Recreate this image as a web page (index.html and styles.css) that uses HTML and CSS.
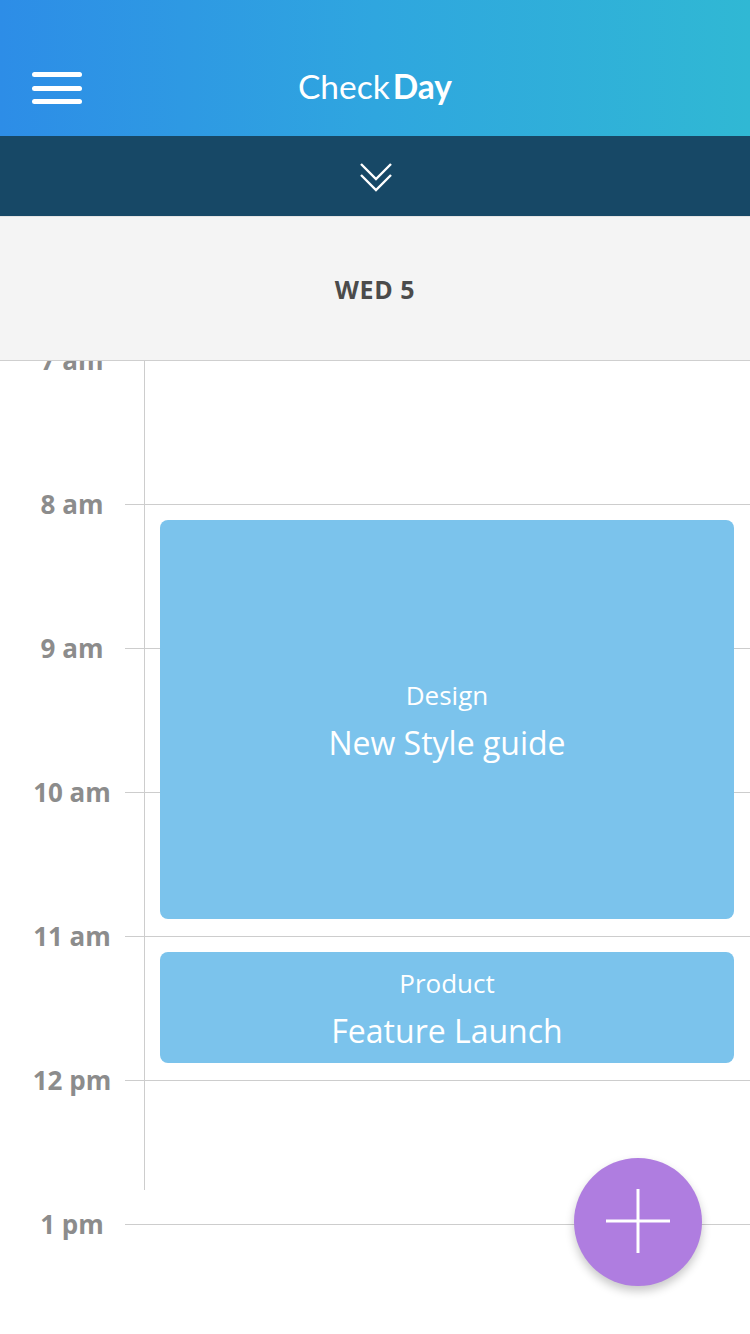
FILE: index.html
```html
<!DOCTYPE html>
<html>
<head>
<meta charset="utf-8">
<link rel="stylesheet" href="styles.css">
</head>
<body>
<div class="app">
  <header class="topbar">
    <div class="menu">
      <span class="bar"></span><span class="bar"></span><span class="bar"></span>
    </div>
    <div class="title"><span class="light">Check</span><span class="bold">Day</span></div>
    <div class="spacer"></div>
  </header>
  <div class="expander">
    <svg width="34" height="34" viewBox="0 0 34 34">
      <polyline points="2,5 17,20 32,5" fill="none" stroke="#fff" stroke-width="2.4"/>
      <polyline points="2,16 17,31 32,16" fill="none" stroke="#fff" stroke-width="2.4"/>
    </svg>
  </div>
  <div class="dayhead">WED 5</div>
  <main class="timeline">
    <div class="rows">
      <div class="row"><span class="time">7 am</span><span class="rule"></span></div>
      <div class="row"><span class="time">8 am</span><span class="rule"></span></div>
      <div class="row"><span class="time">9 am</span><span class="rule"></span></div>
      <div class="row"><span class="time">10 am</span><span class="rule"></span></div>
      <div class="row"><span class="time">11 am</span><span class="rule"></span></div>
      <div class="row"><span class="time">12 pm</span><span class="rule"></span></div>
      <div class="row"><span class="time">1 pm</span><span class="rule"></span></div>
    </div>
    <div class="vline"></div>
    <div class="event ev-design">
      <div class="cat">Design</div>
      <div class="name">New Style guide</div>
    </div>
    <div class="event ev-product">
      <div class="cat">Product</div>
      <div class="name">Feature Launch</div>
    </div>
    <button class="fab" aria-label="Add">
      <svg width="66" height="66" viewBox="0 0 66 66">
        <line x1="1" y1="32" x2="65" y2="32" stroke="#fff" stroke-width="3"/>
        <line x1="33" y1="0" x2="33" y2="64" stroke="#fff" stroke-width="3"/>
      </svg>
    </button>
  </main>
</div>
</body>
</html>
```
FILE: styles.css
```css
* { box-sizing: border-box; }
html, body {
  margin: 0;
  padding: 0;
  width: 750px;
  height: 1334px;
  overflow: hidden;
  background: #fff;
  font-family: "Open Sans", "Noto Sans", sans-serif;
}
.app {
  width: 750px;
  height: 1334px;
  display: flex;
  flex-direction: column;
}
.topbar {
  height: 136px;
  flex: none;
  padding-top: 40px;
  display: grid;
  grid-template-columns: 1fr auto 1fr;
  align-items: center;
  background: linear-gradient(90deg, #2d8de7 0%, #2fa6df 50%, #30b8d4 100%);
  color: #fff;
}
.menu {
  padding-left: 32px;
  display: flex;
  flex-direction: column;
  gap: 8.5px;
}
.bar {
  display: block;
  width: 50px;
  height: 5px;
  border-radius: 3px;
  background: #fff;
}
.title {
  font-family: Lato, "Open Sans", sans-serif;
  font-size: 33.5px;
  padding-bottom: 4px;
}
.title .light { font-weight: 400; }
.title .bold { font-weight: 700; margin-left: 3px; }
.expander {
  height: 80px;
  flex: none;
  background: #174866;
  display: flex;
  align-items: center;
  justify-content: center;
  padding-left: 2px;
}
.dayhead {
  height: 145px;
  flex: none;
  background: #f4f4f4;
  border-top: 1px solid #e4e4e4;
  border-bottom: 1px solid #cfcfcf;
  display: flex;
  align-items: center;
  justify-content: center;
  font-size: 25px;
  font-weight: 700;
  color: #4b4b4b;
  letter-spacing: 0.6px;
}
.timeline {
  flex: 1;
  position: relative;
  overflow: hidden;
}
.rows {
  margin-top: -73px;
  display: flex;
  flex-direction: column;
}
.row {
  height: 144px;
  display: flex;
  align-items: center;
}
.time {
  width: 125px;
  padding-left: 19px;
  text-align: center;
  font-size: 26px;
  font-weight: 700;
  color: #8c8c8c;
}
.rule {
  flex: 1;
  height: 1px;
  background: #cdcdcd;
}
.vline {
  position: absolute;
  left: 144px;
  top: 0;
  width: 1px;
  height: 829px;
  background: #cdcdcd;
}
.event {
  position: absolute;
  left: 160px;
  width: 574px;
  background: #7bc3ec;
  border-radius: 8px;
  color: #fff;
  display: flex;
  flex-direction: column;
  align-items: center;
  justify-content: center;
}
.ev-design { top: 159px; height: 399px; }
.ev-product { top: 591px; height: 111px; }
.cat {
  font-size: 26px;
  line-height: 44px;
  padding-top: 2px;
}
.name {
  font-size: 32px;
  line-height: 52px;
}
.fab {
  position: absolute;
  right: 48px;
  bottom: 48px;
  width: 128px;
  height: 128px;
  border-radius: 50%;
  border: none;
  padding: 0;
  background: #af7de0;
  box-shadow: 0 5px 10px rgba(0, 0, 0, 0.22);
  display: flex;
  align-items: center;
  justify-content: center;
}
```
